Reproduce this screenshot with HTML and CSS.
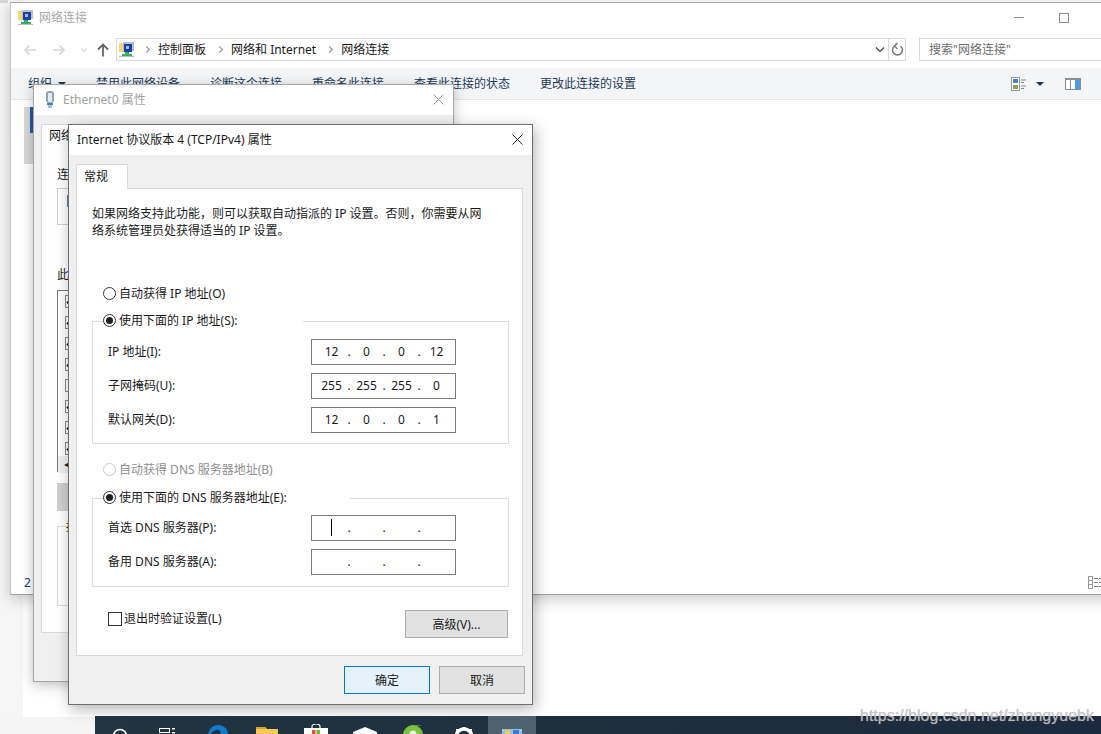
FILE: index.html
```html
<!DOCTYPE html>
<html>
<head>
  <meta charset="utf-8">
  <title>网络连接</title>
  <link rel="stylesheet" href="styles.css">
</head>
<body>
  <div class="left-strip"></div>
  <div class="bottom-strip"></div>
  <div class="corner"></div>

  <!-- explorer window -->
  <div class="window explorer">
    <div class="ex-title">
      <svg class="net-icon" width="16" height="16" viewBox="0 0 16 16"><rect x="0" y="1" width="6" height="9" fill="#f3d77c"/><rect x="4" y="0" width="11" height="9" fill="#b9bfc7"/><rect x="5" y="2" width="8" height="8" fill="#1c3fb0"/><rect x="7" y="4" width="3" height="3" fill="#9fc0ea"/><rect x="6" y="10" width="4" height="2" fill="#2fb45a"/><rect x="3" y="12" width="10" height="2" fill="#2fb45a"/><rect x="0" y="14" width="15" height="1" fill="#bbb"/></svg>
      <span class="ex-title-text">网络连接</span>
      <span class="ex-controls">
        <span class="ctl-min"></span>
        <span class="ctl-max"></span>
      </span>
    </div>

    <div class="nav">
      <div class="nav-btns">
        <svg width="14" height="12" viewBox="0 0 14 12"><path d="M13 6H2M6.500 1.500 2 6l4.500 4.500" fill="none" stroke="#d6d6d6" stroke-width="1.600"/></svg>
        <svg class="nb-fwd" width="14" height="12" viewBox="0 0 14 12"><path d="M1 6h11M7.500 1.500 12 6l-4.500 4.500" fill="none" stroke="#d6d6d6" stroke-width="1.600"/></svg>
        <svg class="nb-down" width="8" height="6" viewBox="0 0 8 6"><path d="M1 1.500 4 4.500l3-3" fill="none" stroke="#d8d8d8" stroke-width="1.200"/></svg>
        <svg class="nb-up" width="12" height="14" viewBox="0 0 12 14"><path d="M6 13.500V2M1 6.500 6 1.500l5 5" fill="none" stroke="#666" stroke-width="1.800"/></svg>
      </div>
      <div class="address">
        <svg class="net-icon" width="16" height="16" viewBox="0 0 16 16"><rect x="0" y="1" width="6" height="9" fill="#f3d77c"/><rect x="4" y="0" width="11" height="9" fill="#b9bfc7"/><rect x="5" y="2" width="8" height="8" fill="#1c3fb0"/><rect x="7" y="4" width="3" height="3" fill="#9fc0ea"/><rect x="6" y="10" width="4" height="2" fill="#2fb45a"/><rect x="3" y="12" width="10" height="2" fill="#2fb45a"/><rect x="0" y="14" width="15" height="1" fill="#bbb"/></svg>
        <span class="crumb-sep first"></span>
        <span>控制面板</span>
        <span class="crumb-sep"></span>
        <span>网络和 Internet</span>
        <span class="crumb-sep"></span>
        <span>网络连接</span>
        <span class="addr-right">
          <svg class="addr-chev" width="10" height="7" viewBox="0 0 10 7"><path d="M1 1.500 5 5.500l4-4" fill="none" stroke="#555" stroke-width="1.500"/></svg>
          <span class="addr-refresh">
            <svg width="13" height="15" viewBox="0 0 13 15"><path d="M9.500 4A5 5 0 1 1 3.500 4M6.500 1 3.500 4l3 3" fill="none" stroke="#777" stroke-width="1.500"/></svg>
          </span>
        </span>
      </div>
      <div class="search">搜索"网络连接"</div>
    </div>

    <div class="toolbar">
      <span class="tb-org">组织<i class="tb-caret"></i></span>
      <span>禁用此网络设备</span>
      <span>诊断这个连接</span>
      <span>重命名此连接</span>
      <span>查看此连接的状态</span>
      <span>更改此连接的设置</span>
      <span class="tb-right">
        <svg width="15" height="14" viewBox="0 0 15 14"><rect x=".5" y=".5" width="8" height="13" fill="#fff" stroke="#999"/><rect x="2" y="2" width="5" height="4" fill="#4f86b8"/><rect x="2" y="8" width="5" height="4" fill="#8aa554"/><path d="M10 3h5M10 5.500h3M10 9h5M10 11.500h3" stroke="#888"/></svg>
        <i class="tb-caret view"></i>
        <svg class="tb-pane" width="16" height="12" viewBox="0 0 16 12"><rect x=".5" y=".5" width="15" height="11" fill="#fff" stroke="#8c8c8c"/><rect x="0" y="0" width="16" height="2" fill="#8c8c8c"/><rect x="5" y="1" width="1" height="10" fill="#8c8c8c"/><rect x="10" y="2" width="5" height="9" fill="#4a9de0"/></svg>
      </span>
    </div>

    <div class="ex-main">
      <div class="ex-side"><i></i></div>
      <div class="ex-status">
        <span>2</span>
        <svg width="13" height="13" viewBox="0 0 13 13"><rect x=".5" y=".5" width="4" height="12" fill="#fff" stroke="#999"/><path d="M0 4.500h5M0 8.500h5" stroke="#999"/><path d="M6 2.500h4M6 6.500h4M6 10.500h4M11 2.500h2M11 6.500h2M11 10.500h2" stroke="#777"/></svg>
      </div>
    </div>
  </div>

  <!-- Ethernet0 properties, mostly covered -->
  <div class="window eth">
    <div class="dlg-title">
      <svg width="12" height="17" viewBox="0 0 12 17"><rect x="2" y="0" width="8" height="12" rx="3" fill="#8fa3b3"/><rect x="4" y="2" width="4" height="9" fill="#e4ebf0"/><rect x="3" y="12" width="6" height="2" fill="#5a7d99"/><path d="M5 14v3M7 14v3" stroke="#2f88d0"/></svg>
      <span class="dlg-title-text faded">Ethernet0 属性</span>
      <svg class="dlg-x" width="11" height="11" viewBox="0 0 11 11"><path d="M.5.5l10 10M10.500.5l-10 10" stroke="#9a9a9a"/></svg>
    </div>
    <div class="eth-body">
      <div class="eth-panel">
        <div class="eth-tab">网络</div>
        <div class="eth-label">连接</div>
        <div class="eth-adapter"><i></i></div>
        <div class="eth-label second">此连接</div>
        <div class="eth-list">
          <div class="eth-row"><i class="on"></i></div>
          <div class="eth-row"><i class="on"></i></div>
          <div class="eth-row"><i class="on"></i></div>
          <div class="eth-row"><i class="on"></i></div>
          <div class="eth-row"><i></i></div>
          <div class="eth-row"><i class="on"></i></div>
          <div class="eth-row"><i class="on"></i></div>
          <div class="eth-row"><i class="on"></i></div>
          <div class="eth-scroll">◂</div>
        </div>
        <div class="eth-button"></div>
        <div class="eth-group"><span>描述</span></div>
      </div>
    </div>
  </div>

  <!-- TCP/IPv4 properties -->
  <div class="window tcp">
    <div class="dlg-title">
      <span class="dlg-title-text">Internet 协议版本 4 (TCP/IPv4) 属性</span>
      <svg class="dlg-x" width="11" height="11" viewBox="0 0 11 11"><path d="M.5.5l10 10M10.500.5l-10 10" stroke="#222"/></svg>
    </div>
    <div class="tcp-body">
      <div class="tab">常规</div>
      <div class="panel">
        <p class="intro">如果网络支持此功能，则可以获取自动指派的 IP 设置。否则，你需要从网络系统管理员处获得适当的 IP 设置。</p>

        <label class="opt first-opt"><i class="radio"></i>自动获得 IP 地址(O)</label>

        <fieldset class="group ip-group">
          <legend><label class="opt"><i class="radio checked"></i>使用下面的 IP 地址(S):</label></legend>
          <div class="row">
            <span>IP 地址(I):</span>
            <div class="ip"><b>12</b><u>.</u><b>0</b><u>.</u><b>0</b><u>.</u><b>12</b></div>
          </div>
          <div class="row">
            <span>子网掩码(U):</span>
            <div class="ip"><b>255</b><u>.</u><b>255</b><u>.</u><b>255</b><u>.</u><b>0</b></div>
          </div>
          <div class="row">
            <span>默认网关(D):</span>
            <div class="ip"><b>12</b><u>.</u><b>0</b><u>.</u><b>0</b><u>.</u><b>1</b></div>
          </div>
        </fieldset>

        <label class="opt off"><i class="radio"></i>自动获得 DNS 服务器地址(B)</label>

        <fieldset class="group dns-group">
          <legend><label class="opt"><i class="radio checked"></i>使用下面的 DNS 服务器地址(E):</label></legend>
          <div class="row">
            <span>首选 DNS 服务器(P):</span>
            <div class="ip"><b class="caret"></b><u>.</u><b></b><u>.</u><b></b><u>.</u><b></b></div>
          </div>
          <div class="row">
            <span>备用 DNS 服务器(A):</span>
            <div class="ip"><b></b><u>.</u><b></b><u>.</u><b></b><u>.</u><b></b></div>
          </div>
        </fieldset>

        <div class="panel-foot">
          <label class="check"><i></i>退出时验证设置(L)</label>
          <div class="btn advanced">高级(V)...</div>
        </div>
      </div>
      <div class="dlg-foot">
        <div class="btn ok">确定</div>
        <div class="btn">取消</div>
      </div>
    </div>
  </div>

  <!-- taskbar, cut off by the bottom of the picture -->
  <div class="taskbar">
    <svg class="tk search-ic" width="16" height="16" viewBox="0 0 16 16"><circle cx="8" cy="8" r="6.500" fill="none" stroke="#fff" stroke-width="1.600"/></svg>
    <svg class="tk tasks-ic" width="16" height="8" viewBox="0 0 16 8"><path d="M0 .5h11M0 4.500h11M.5 0v5M10.500 0v5" stroke="#fff" fill="none"/><rect x="13" y="0" width="3" height="1.500" fill="#fff"/><rect x="13" y="4" width="3" height="1.500" fill="#fff"/></svg>
    <svg class="tk edge-ic" width="20" height="10" viewBox="0 0 20 10"><path d="M0 10C1 3 5 0 10 0s10 3 10 10h-8c2-4-1-6-4-5-3 1-5 3-5 5z" fill="#0c7bd0"/></svg>
    <svg class="tk folder-ic" width="22" height="8" viewBox="0 0 22 8"><path d="M0 0h9l2 2h11v6H0z" fill="#f4c85a"/><path d="M0 0h9l2 2H0z" fill="#d9a12f"/></svg>
    <svg class="tk store-ic" width="24" height="10" viewBox="0 0 24 10"><path d="M8 4V2.500a4 2.500 0 0 1 8 0V4" fill="none" stroke="#fff" stroke-width="1.200"/><rect x="0" y="4" width="24" height="6" fill="#fff"/><rect x="8" y="6" width="3.500" height="4" fill="#e8502a"/><rect x="12.500" y="6" width="3.500" height="4" fill="#78b82a"/></svg>
    <svg class="tk mail-ic" width="24" height="8" viewBox="0 0 24 8"><path d="M12 0 24 5v3H0V5z" fill="#fff"/></svg>
    <svg class="tk green-ic" width="20" height="9" viewBox="0 0 20 9"><circle cx="10" cy="10" r="10" fill="#7dc143"/><circle cx="10" cy="9" r="3.500" fill="#eaf5dc"/><path d="M12 1c2-1 4-1 6-1" stroke="#6fb539" fill="none"/></svg>
    <svg class="tk gear-ic" width="18" height="8" viewBox="0 0 18 8"><circle cx="9" cy="10" r="8" fill="none" stroke="#fff" stroke-width="3.500"/><rect x="7" y="0" width="4" height="3" fill="#fff"/><rect x="1" y="2" width="3" height="3" fill="#fff"/><rect x="14" y="2" width="3" height="3" fill="#fff"/></svg>
    <div class="tk-active">
      <svg width="20" height="5" viewBox="0 0 20 5"><rect width="20" height="5" fill="#8ec2ea"/><rect x="3" y="1" width="5" height="4" fill="#f1c94f"/><rect x="11" y="1" width="6" height="4" fill="#3b79c9"/></svg>
    </div>
  </div>

  <div class="watermark">https://blog.csdn.net/zhangyuebk</div>
</body>
</html>
```

FILE: styles.css
```css
* {
  box-sizing: border-box;
}

html, body {
  margin: 0;
  height: 734px;
  overflow: hidden;
}

body {
  position: relative;
  background-color: #fff;
  font-family: "Noto Sans", "Noto Sans CJK SC", sans-serif;
  font-size: 12px;
  line-height: 17px;
  color: #1a1a1a;
}

i, u, b {
  font-style: normal;
  font-weight: normal;
  text-decoration: none;
}

/* bits of the desktop behind the windows */
.left-strip {
  position: absolute;
  left: 0;
  top: 0;
  width: 23px;
  height: 734px;
  background-color: #f6f6f6;
}

.bottom-strip {
  position: absolute;
  left: 0;
  top: 717px;
  width: 95px;
  height: 17px;
  background-color: #f5f5f5;
}

.corner {
  position: absolute;
  left: 0;
  top: 0;
  width: 8px;
  height: 3px;
  background-color: #d8d8d8;
}

/* windows on the desktop */
.window {
  position: absolute;
  display: flex;
  flex-direction: column;
}

.explorer {
  left: 10px;
  top: 2px;
  width: 1110px;
  height: 593px;
  background-color: #fff;
  border-top: 1px solid #a8a8a8;
  border-left: 1px solid #c4c4c4;
  border-bottom: 1px solid #a0a0a0;
  box-shadow: 0 4px 14px rgba(0, 0, 0, 0.22);
}

.ex-title {
  display: flex;
  align-items: center;
  height: 27px;
  padding: 2px 0 0 7px;
}

.ex-title-text {
  margin-left: 5px;
  color: #a8a8a8;
}

.ex-controls {
  position: relative;
  margin-left: auto;
  margin-right: 51px;
  display: flex;
  align-items: center;
  gap: 35px;
}

.ctl-min {
  width: 10px;
  height: 1px;
  background-color: #8a8a8a;
}

.ctl-max {
  width: 10px;
  height: 10px;
  border: 1px solid #8a8a8a;
}

.nav {
  display: flex;
  align-items: center;
  height: 23px;
  margin-top: 8px;
}

.nav-btns {
  display: flex;
  align-items: center;
  width: 105px;
  padding-left: 12px;
}

.nb-fwd {
  margin-left: 15px;
}

.nb-down {
  margin-left: 14px;
}

.nb-up {
  margin-left: 9px;
}

.address {
  display: flex;
  align-items: center;
  width: 790px;
  height: 23px;
  border: 1px solid #d9d9d9;
  padding-left: 2px;
  color: #1a1a1a;
}

.crumb-sep {
  width: 5px;
  height: 5px;
  margin: 0 9px 0 11px;
  border-top: 1px solid #8a8a8a;
  border-right: 1px solid #8a8a8a;
  transform: rotate(45deg);
}

.crumb-sep.first {
  margin-left: 9px;
  margin-right: 9px;
}

.addr-right {
  display: flex;
  align-items: center;
  margin-left: auto;
  height: 100%;
}

.addr-chev {
  margin-right: 3px;
}

.addr-refresh {
  display: flex;
  align-items: center;
  justify-content: center;
  width: 17px;
  height: 100%;
  border-left: 1px solid #d9d9d9;
}

.search {
  width: 190px;
  height: 23px;
  margin-left: 13px;
  padding: 2px 0 0 9px;
  border: 1px solid #d9d9d9;
  color: #6d6d6d;
}

.toolbar {
  display: flex;
  align-items: center;
  gap: 30px;
  height: 32px;
  margin-top: 7px;
  padding-left: 17px;
  background-color: #f4f5f7;
  border-bottom: 1px solid #e6e6e6;
  color: #1c3a57;
}

.tb-org {
  display: flex;
  align-items: center;
}

.tb-caret {
  width: 0;
  height: 0;
  margin-left: 6px;
  border-style: solid;
  border-width: 4px 4px 0;
  border-color: #1c3a57 transparent transparent;
}

.tb-right {
  display: flex;
  align-items: center;
  position: absolute;
  left: 1000px;
}

.tb-caret.view {
  margin-left: 10px;
}

.tb-pane {
  margin-left: 21px;
}

.ex-main {
  position: relative;
  flex: 1;
  display: flex;
}

.ex-side {
  width: 9px;
  height: 57px;
  margin: 7px 0 0 13px;
  background-color: #d8d8d8;
  position: relative;
}

.ex-side i {
  position: absolute;
  right: 0;
  top: 0;
  width: 3px;
  height: 26px;
  background-color: #2d55a5;
}

.ex-status {
  position: absolute;
  left: 13px;
  right: 19px;
  bottom: 3px;
  display: flex;
  align-items: center;
  justify-content: space-between;
  color: #1c3a57;
}

.eth {
  left: 33px;
  top: 84px;
  width: 421px;
  height: 598px;
  background-color: #f0f0f0;
  border: 1px solid #a6a6a6;
  box-shadow: 0 3px 12px rgba(0, 0, 0, 0.25);
}

.tcp {
  left: 68px;
  top: 124px;
  width: 465px;
  height: 581px;
  background-color: #f0f0f0;
  border: 1px solid #6f6f6f;
  box-shadow: 2px 4px 14px rgba(0, 0, 0, 0.3);
}

.dlg-title {
  display: flex;
  align-items: center;
  flex: none;
  height: 30px;
  padding: 0 0 2px 8px;
  background-color: #fff;
}

.eth .dlg-title {
  padding-left: 10px;
}

.dlg-title-text {
  color: #1a1a1a;
}

.dlg-title-text.faded {
  margin-left: 7px;
  color: #a2a2a2;
}

.dlg-x {
  margin-left: auto;
  margin-right: 9px;
}

.eth-body {
  flex: 1;
  padding: 9px 0 48px 7px;
}

.eth-panel {
  height: 100%;
  padding-left: 15px;
  background-color: #fff;
  border: 1px solid #d9d9d9;
  position: relative;
}

.eth-tab {
  margin-left: -8px;
  padding-top: 2px;
  height: 24px;
}

.eth-label {
  margin-top: 17px;
  height: 17px;
}

.eth-adapter {
  width: 200px;
  height: 37px;
  margin-top: 5px;
  border: 1px solid #d0d0d0;
  padding: 6px 0 0 9px;
}

.eth-adapter i {
  display: block;
  width: 4px;
  height: 12px;
  background-color: #5f7f9f;
}

.eth-label.second {
  margin-top: 41px;
}

.eth-list {
  width: 200px;
  height: 182px;
  margin-top: 7px;
  padding: 0 0 0 7px;
  border: 1px solid #7a7a7a;
}

.eth-row {
  height: 21px;
  display: flex;
  align-items: center;
}

.eth-row i {
  position: relative;
  width: 13px;
  height: 13px;
  border: 1px solid #8a8a8a;
}

.eth-row i.on::after {
  content: "";
  position: absolute;
  left: 1px;
  top: 2px;
  width: 8px;
  height: 4px;
  border-left: 2px solid #111;
  border-bottom: 2px solid #111;
  transform: rotate(-45deg);
}

.eth-scroll {
  margin: -3px 0 0 -7px;
  height: 17px;
  width: 190px;
  padding-left: 6px;
  background-color: #f0f0f0;
  line-height: 16px;
}

.eth-button {
  width: 70px;
  height: 28px;
  margin-top: 11px;
  background-color: #cfcfcf;
}

.eth-group {
  width: 200px;
  height: 80px;
  margin-top: 15px;
  border: 1px solid #d9d9d9;
}

.eth-group span {
  position: relative;
  top: -9px;
  left: 8px;
  background-color: #fff;
}

.tcp-body {
  flex: 1;
  padding: 9px 7px 0;
}

.tab {
  width: 52px;
  height: 25px;
  margin-bottom: -1px;
  padding: 3px 0 0 7px;
  background-color: #fff;
  border: 1px solid #d9d9d9;
  border-bottom: none;
  position: relative;
  z-index: 1;
}

.panel {
  height: 468px;
  margin-right: 2px;
  padding: 16px 15px 0;
  background-color: #fff;
  border: 1px solid #d9d9d9;
}

.intro {
  margin: 0;
  width: 400px;
  line-height: 17px;
}

.opt {
  display: flex;
  align-items: center;
  height: 18px;
  white-space: nowrap;
}

.first-opt {
  margin: 45px 0 0 11px;
}

.opt.off {
  margin: 16px 0 0 11px;
  color: #8f8f8f;
}

.radio {
  flex: none;
  width: 13px;
  height: 13px;
  margin-right: 3px;
  border: 1px solid #333;
  border-radius: 50%;
  position: relative;
}

.off .radio {
  border-color: #c8c8c8;
}

.radio.checked::after {
  content: "";
  position: absolute;
  left: 2px;
  top: 2px;
  width: 7px;
  height: 7px;
  border-radius: 50%;
  background-color: #222;
}

.group {
  width: 417px;
  margin: 0;
  padding: 0 0 10px 15px;
  border: 1px solid #dcdcdc;
  min-width: 0;
}

.ip-group {
  margin-top: 9px;
}

.dns-group {
  margin-top: 10px;
  padding-bottom: 11px;
}

.group legend {
  margin-left: -5px;
  padding: 0 0 2px;
  width: 200px;
}

.dns-group legend {
  width: 247px;
}

.row {
  display: flex;
  align-items: center;
  justify-content: space-between;
  height: 26px;
  margin-top: 8px;
  padding-right: 52px;
}

.row > span {
  margin-top: -2px;
}

.ip-group .row:first-of-type {
  margin-top: 8px;
}

.dns-group .row:first-of-type {
  margin-top: 7px;
}

.ip {
  display: flex;
  align-items: center;
  width: 145px;
  height: 26px;
  padding: 0 0 2px 3px;
  border: 1px solid #7a7a7a;
}

.ip b {
  width: 33px;
  text-align: center;
}

.ip u {
  width: 2px;
  display: flex;
  justify-content: center;
}

.ip .caret {
  position: relative;
  height: 17px;
}

.ip .caret::after {
  content: "";
  position: absolute;
  left: 16px;
  top: 0;
  width: 1px;
  height: 17px;
  background-color: #000;
}

.panel-foot {
  display: flex;
  align-items: flex-start;
  justify-content: space-between;
  margin: 23px -1px 0 0;
  padding: 0 0 0 16px;
}

.check {
  display: flex;
  align-items: center;
}

.check i {
  width: 14px;
  height: 14px;
  margin-right: 2px;
  border: 1px solid #333;
}

.btn {
  display: flex;
  align-items: center;
  justify-content: center;
  width: 86px;
  height: 28px;
  background-color: #e1e1e1;
  border: 1px solid #adadad;
}

.advanced {
  width: 103px;
}

.ok {
  background-color: #e5f1fb;
  border-color: #0078d7;
}

.dlg-foot {
  display: flex;
  justify-content: flex-end;
  gap: 9px;
  padding-top: 10px;
}

/* taskbar */
.taskbar {
  position: absolute;
  left: 95px;
  right: 0;
  top: 716px;
  height: 18px;
  overflow: hidden;
  background: linear-gradient(90deg, #22343f, #1b2a3e);
}

.tk {
  position: absolute;
}

.search-ic { left: 17px; top: 12px; }
.tasks-ic { left: 64px; top: 12px; }
.edge-ic { left: 113px; top: 9px; }
.folder-ic { left: 161px; top: 11px; }
.store-ic { left: 209px; top: 8px; }
.mail-ic { left: 258px; top: 11px; }
.green-ic { left: 308px; top: 9px; }
.gear-ic { left: 360px; top: 11px; }

.tk-active {
  position: absolute;
  left: 393px;
  top: 0;
  width: 48px;
  height: 18px;
  padding: 13px 0 0 14px;
  background-color: #4d626d;
}

.tk-active svg {
  display: block;
}

.watermark {
  position: absolute;
  left: 860px;
  top: 704px;
  font-family: "Liberation Sans", Arial, sans-serif;
  font-size: 16px;
  line-height: 24px;
  color: rgba(195, 195, 195, 0.85);
  text-shadow: 0 0 1px rgba(180, 180, 180, 0.7);
  white-space: nowrap;
}
```
